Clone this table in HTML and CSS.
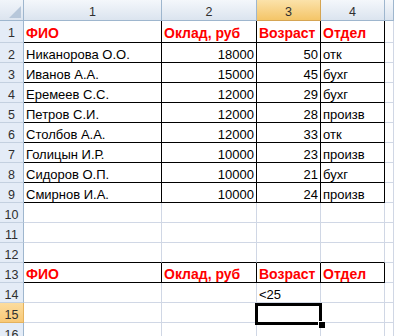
FILE: index.html
```html
<!DOCTYPE html>
<html>
<head>
<meta charset="utf-8">
<link rel="stylesheet" href="styles.css">
</head>
<body>
<div class="sheet">
  <div class="corner"><span class="tri"></span></div>
  <div class="ch">1</div><div class="ch">2</div><div class="ch sel">3</div><div class="ch">4</div><div class="ch"></div>

  <div class="rh">1</div>
  <div class="c t h big">ФИО</div><div class="c t h big">Оклад, руб</div><div class="c t h big">Возраст</div><div class="c t h big">Отдел</div><div class="c"></div>

  <div class="rh">2</div>
  <div class="c t">Никанорова О.О.</div><div class="c t n">18000</div><div class="c t n">50</div><div class="c t">отк</div><div class="c"></div>

  <div class="rh">3</div>
  <div class="c t">Иванов А.А.</div><div class="c t n">15000</div><div class="c t n">45</div><div class="c t">бухг</div><div class="c"></div>

  <div class="rh">4</div>
  <div class="c t">Еремеев С.С.</div><div class="c t n">12000</div><div class="c t n">29</div><div class="c t">бухг</div><div class="c"></div>

  <div class="rh">5</div>
  <div class="c t">Петров С.И.</div><div class="c t n">12000</div><div class="c t n">28</div><div class="c t">произв</div><div class="c"></div>

  <div class="rh">6</div>
  <div class="c t">Столбов А.А.</div><div class="c t n">12000</div><div class="c t n">33</div><div class="c t">отк</div><div class="c"></div>

  <div class="rh">7</div>
  <div class="c t">Голицын И.Р.</div><div class="c t n">10000</div><div class="c t n">23</div><div class="c t">произв</div><div class="c"></div>

  <div class="rh">8</div>
  <div class="c t">Сидоров О.П.</div><div class="c t n">10000</div><div class="c t n">21</div><div class="c t">бухг</div><div class="c"></div>

  <div class="rh">9</div>
  <div class="c t">Смирнов И.А.</div><div class="c t n">10000</div><div class="c t n">24</div><div class="c t">произв</div><div class="c"></div>

  <div class="rh">10</div>
  <div class="c"></div><div class="c"></div><div class="c"></div><div class="c"></div><div class="c"></div>

  <div class="rh">11</div>
  <div class="c"></div><div class="c"></div><div class="c"></div><div class="c"></div><div class="c"></div>

  <div class="rh">12</div>
  <div class="c tb"></div><div class="c tb"></div><div class="c tb"></div><div class="c tb"></div><div class="c"></div>

  <div class="rh">13</div>
  <div class="c t h">ФИО</div><div class="c t h">Оклад, руб</div><div class="c t h">Возраст</div><div class="c t h">Отдел</div><div class="c"></div>

  <div class="rh">14</div>
  <div class="c"></div><div class="c"></div><div class="c">&lt;25</div><div class="c"></div><div class="c"></div>

  <div class="rh sel">15</div>
  <div class="c"></div><div class="c"></div><div class="c active"><span class="handle"></span></div><div class="c"></div><div class="c"></div>

  <div class="rh">16</div>
  <div class="c"></div><div class="c"></div><div class="c"></div><div class="c"></div><div class="c"></div>
</div>
</body>
</html>
```
FILE: styles.css
```css
html, body {
  margin: 0;
  padding: 0;
  background: #ffffff;
  overflow: hidden;
}

.sheet {
  display: grid;
  grid-template-columns: 24px 138px 95px 64px 64px 9px;
  grid-template-rows: 21px 22px repeat(15, 20px);
  width: 394px;
  height: 336px;
  overflow: hidden;
  font-family: "Liberation Sans", Arial, sans-serif;
  color: #000;
}

.sheet > div {
  box-sizing: border-box;
  min-width: 0;
}

.corner {
  position: relative;
  background: linear-gradient(#f1f5fa, #dce4ef);
  border-right: 1px solid #9eb6ce;
  border-bottom: 1px solid #9eb6ce;
}

.tri {
  position: absolute;
  right: 2px;
  bottom: 2px;
  width: 0;
  height: 0;
  border-left: 12px solid transparent;
  border-bottom: 12px solid #b7c7da;
}

.ch {
  background: linear-gradient(#f4f7fb, #dbe4ef);
  border-right: 1px solid #9eb6ce;
  border-bottom: 1px solid #9eb6ce;
  text-align: center;
  font-size: 12.5px;
  line-height: 25px;
  color: #2f2f2f;
}

.ch.sel {
  background: linear-gradient(#fbe2aa, #f4c568);
  border-right-color: #d5a553;
  border-bottom-color: #d5a553;
}

.rh {
  background: #e4ecf7;
  border-right: 1px solid #9eb6ce;
  border-bottom: 1px solid #c3d0e0;
  text-align: center;
  font-size: 12.5px;
  line-height: 24px;
  color: #2f2f2f;
}

.rh.sel {
  background: linear-gradient(#fcdc9e, #f8c977);
  border-bottom-color: #e4b25e;
  border-right-color: #e4b25e;
}

.c {
  background: #ffffff;
  border-right: 1px solid #d0d7e5;
  border-bottom: 1px solid #d0d7e5;
  font-size: 13px;
  line-height: 23px;
  padding: 0 2px;
  white-space: nowrap;
}

.c.t {
  border-right-color: #000;
  border-bottom-color: #000;
}

.c.tb {
  border-bottom-color: #000;
}

.c.n {
  text-align: right;
}

.c.h {
  color: #ff0000;
  font-weight: bold;
  font-size: 14px;
  line-height: 22px;
}

.c.h.big {
  line-height: 24px;
}

.c.active {
  position: relative;
}

.c.active::after {
  content: "";
  position: absolute;
  left: -2px;
  top: 0;
  width: 67px;
  height: 22px;
  box-sizing: border-box;
  border: 3px solid #000;
}

.handle {
  position: absolute;
  left: 61px;
  top: 18px;
  width: 6px;
  height: 6px;
  background: #000;
  border-left: 1px solid #fff;
  border-top: 1px solid #fff;
  z-index: 1;
}
```
